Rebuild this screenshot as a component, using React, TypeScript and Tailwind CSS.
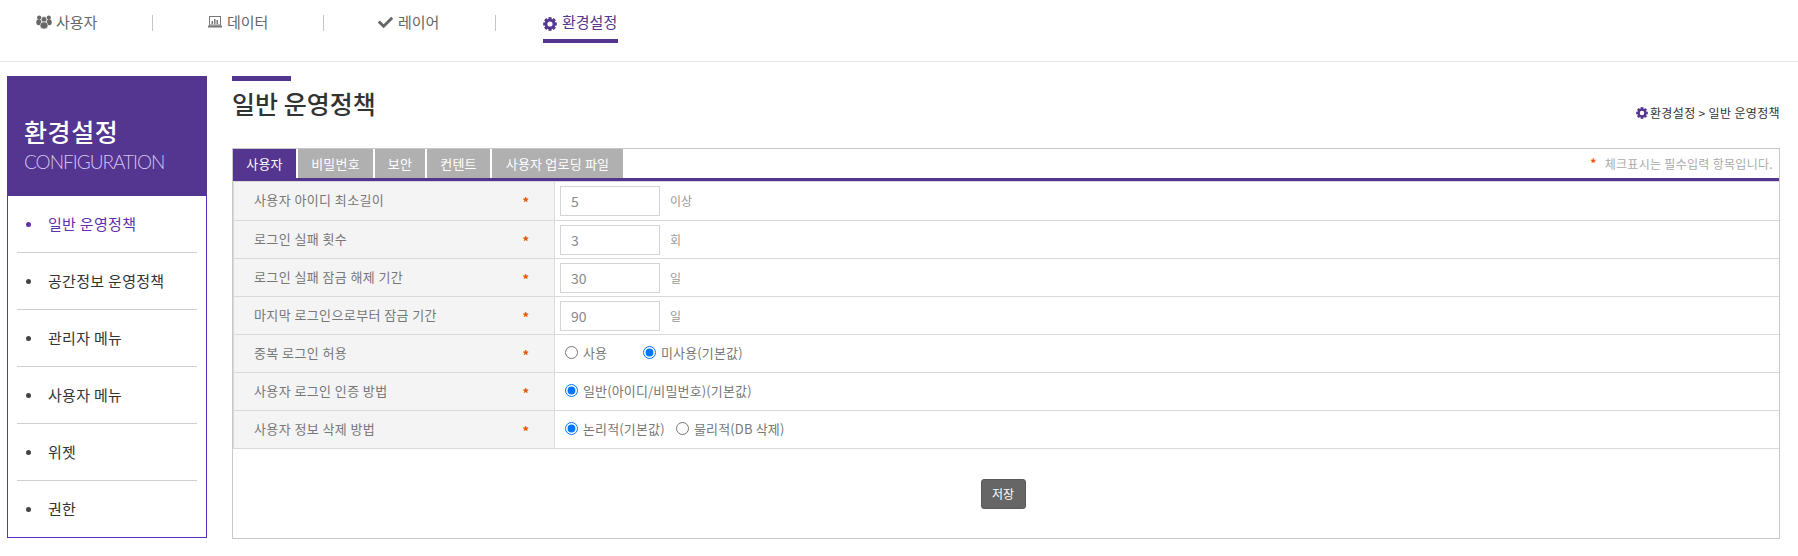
import React from "react";
import { FaCheck } from "react-icons/fa";

function Gear({ className }: { className: string }) {
  const teeth = [0, 45, 90, 135, 180, 225, 270, 315];
  return (
    <svg viewBox="0 0 14 14" className={className}>
      {teeth.map((a) => (
        <rect key={a} x="5.4" y="0.2" width="3.2" height="3" fill="currentColor" transform={`rotate(${a} 7 7)`} />
      ))}
      <circle cx="7" cy="7" r="3.9" fill="none" stroke="currentColor" strokeWidth="2.6" />
    </svg>
  );
}

function People() {
  return (
    <svg viewBox="0 0 16 14" className="w-[16px] h-[14px] text-[#666]">
      <circle cx="3.2" cy="2.6" r="2.1" fill="currentColor" />
      <circle cx="12.8" cy="2.6" r="2.1" fill="currentColor" />
      <ellipse cx="2.8" cy="7.2" rx="2.5" ry="3" fill="currentColor" />
      <ellipse cx="13.2" cy="7.2" rx="2.5" ry="3" fill="currentColor" />
      <circle cx="8" cy="4.4" r="2.8" fill="currentColor" stroke="#fff" strokeWidth="0.6" />
      <ellipse cx="8" cy="10.4" rx="4" ry="3.6" fill="currentColor" stroke="#fff" strokeWidth="0.6" />
    </svg>
  );
}

function LaptopChart() {
  return (
    <svg viewBox="0 0 14 12" className="w-[14px] h-[12px] text-[#777]">
      <rect x="1.5" y="0.5" width="11" height="8.5" fill="#fff" stroke="currentColor" strokeWidth="1" />
      <rect x="3.5" y="5" width="1.5" height="3" fill="currentColor" />
      <rect x="6" y="3" width="1.5" height="5" fill="currentColor" />
      <rect x="8.5" y="4" width="1.5" height="4" fill="currentColor" />
      <rect x="0" y="9.5" width="14" height="2" fill="currentColor" />
    </svg>
  );
}

const Sep = () => <div className="w-px h-[16px] mt-[15px] bg-[#c4c4c4]" />;

const rows: { label: string; value?: string; unit?: string; radios?: { text: string; checked: boolean; cls: string }[] }[] = [
  { label: "사용자 아이디 최소길이", value: "5", unit: "이상" },
  { label: "로그인 실패 횟수", value: "3", unit: "회" },
  { label: "로그인 실패 잠금 해제 기간", value: "30", unit: "일" },
  { label: "마지막 로그인으로부터 잠금 기간", value: "90", unit: "일" },
  {
    label: "중복 로그인 허용",
    radios: [
      { text: "사용", checked: false, cls: "w-[78px]" },
      { text: "미사용(기본값)", checked: true, cls: "" },
    ],
  },
  { label: "사용자 로그인 인증 방법", radios: [{ text: "일반(아이디/비밀번호)(기본값)", checked: true, cls: "" }] },
  {
    label: "사용자 정보 삭제 방법",
    radios: [
      { text: "논리적(기본값)", checked: true, cls: "w-[111px]" },
      { text: "물리적(DB 삭제)", checked: false, cls: "" },
    ],
  },
];

const tabs = [
  { t: "사용자", w: "w-[63px]", on: true },
  { t: "비밀번호", w: "w-[75px]", on: false },
  { t: "보안", w: "w-[50px]", on: false },
  { t: "컨텐트", w: "w-[63px]", on: false },
  { t: "사용자 업로딩 파일", w: "w-[131px]", on: false },
];

const side = ["일반 운영정책", "공간정보 운영정책", "관리자 메뉴", "사용자 메뉴", "위젯", "권한"];

export default function App() {
  return (
    <div className="w-[1798px] h-[556px] overflow-hidden bg-white font-['Noto_Sans_CJK_KR','Noto_Sans',sans-serif]">
      <header className="h-[62px] border-b border-[#e4e4ea] flex pl-[36px] text-[15px] text-[#666]">
        <div className="w-[116px] flex items-center gap-[4px] h-[30px] pt-[14px]">
          <People />
          <span>사용자</span>
        </div>
        <Sep />
        <div className="w-[170px] pl-[55px] flex items-center gap-[5px] h-[30px] pt-[14px]">
          <LaptopChart />
          <span>데이터</span>
        </div>
        <Sep />
        <div className="w-[171px] pl-[54px] flex items-center gap-[5px] h-[30px] pt-[14px]">
          <FaCheck className="w-[15px] h-[15px] text-[#666]" />
          <span>레이어</span>
        </div>
        <Sep />
        <div className="ml-[47px] h-[43px] w-[75px] border-b-4 border-[#54358f] text-[#54358f] flex items-start gap-[5px] pt-[12px] leading-[20px]">
          <Gear className="w-[14px] h-[14px] mt-[5px] shrink-0" />
          <span className="whitespace-nowrap">환경설정</span>
        </div>
      </header>

      <div className="flex pl-[7px] pt-[14px]">
        <aside className="w-[200px]">
          <div className="h-[120px] bg-[#54358f] pl-[17px] pt-[37px]">
            <div className="text-[25px] leading-[36px] font-medium text-white tracking-[0.6px]">환경설정</div>
            <div className="text-[19px] leading-[26px] font-['Lato',sans-serif] font-light text-[#d3c3f2] tracking-[-1px]">CONFIGURATION</div>
          </div>
          <ul className="h-[342px] border border-t-0 border-[#5f2fc0] px-[9px]">
            {side.map((s, i) => (
              <li
                key={s}
                className={`h-[57px] flex items-center text-[15px] tracking-[0.3px] pl-[9px] ${i < 5 ? "border-b border-[#cfcfcf]" : ""} ${i === 0 ? "text-[#5f2fb0]" : "text-[#333]"}`}
              >
                <span className={`w-[5px] h-[5px] rounded-full mr-[17px] ${i === 0 ? "bg-[#5f2fb0]" : "bg-[#444]"}`} />
                {s}
              </li>
            ))}
          </ul>
        </aside>

        <main className="ml-[25px] w-[1548px]">
          <div className="w-[59px] h-[5px] bg-[#54358f]" />
          <div className="flex justify-between h-[67px]">
            <h1 className="text-[25px] leading-[36px] mt-[4px] font-medium text-[#333]">일반 운영정책</h1>
            <div className="flex items-center gap-[2px] text-[12px] tracking-[0.35px] h-[20px] mt-[22px] text-[#333]">
              <Gear className="w-[12px] h-[12px] text-[#54358f]" />
              <span>환경설정 &gt; 일반 운영정책</span>
            </div>
          </div>

          <section className="h-[391px] border border-[#c8c8c8]">
            <div className="flex justify-between h-[32px] border-b-[3px] border-[#54358f]">
              <div className="flex gap-[2px]">
                {tabs.map((t) => (
                  <div
                    key={t.t}
                    className={`${t.w} h-[29px] flex items-center justify-center text-[13px] tracking-[0.2px] text-white ${t.on ? "bg-[#54358f]" : "bg-[#b0b0b0]"}`}
                  >
                    {t.t}
                  </div>
                ))}
              </div>
              <div className="flex items-center h-[29px] pr-[6px] text-[12px] tracking-[0.3px] text-[#aaa]">
                <span className="text-[#e85500] mr-[8px] font-bold mb-[2px]">*</span>
                체크표시는 필수입력 항목입니다.
              </div>
            </div>

            <div className="border-t border-[#d6d6d6]">
              {rows.map((r, i) => (
                <div key={r.label} className={`flex border-b border-[#d9d9d9] ${i === 0 ? "h-[39px]" : "h-[38px]"}`}>
                  <div className="w-[322px] shrink-0 bg-[#f4f4f4] border-l border-r border-[#d9d9d9] flex items-center justify-between pl-[20px] pr-[25px] text-[13px] text-[#777]">
                    <span className="tracking-[0.4px] mb-[2px]">{r.label}</span>
                    <span className="text-[#e85500] font-bold mt-[2px]">*</span>
                  </div>
                  {r.radios ? (
                    <div className="flex items-center pl-[10px] pb-[2px] text-[13px] tracking-[0.15px] text-[#777]">
                      {r.radios.map((x) => (
                        <label key={x.text} className={`flex items-center gap-[5px] ${x.cls}`}>
                          <input type="radio" readOnly checked={x.checked} className="w-[13px] h-[13px] m-0" />
                          {x.text}
                        </label>
                      ))}
                    </div>
                  ) : (
                    <div className="flex items-center pl-[5px] text-[12px] text-[#999]">
                      <input
                        readOnly
                        value={r.value}
                        className="w-[100px] h-[30px] border border-[#d4d4d4] pl-[10px] text-[14px] text-[#888] bg-white"
                      />
                      <span className="ml-[10px]">{r.unit}</span>
                    </div>
                  )}
                </div>
              ))}
            </div>

            <div className="flex justify-center pt-[30px] pr-[6px]">
              <button className="w-[45px] h-[30px] rounded-[3px] bg-[#666] border border-[#5a5a5a] text-white text-[12px]">저장</button>
            </div>
          </section>
        </main>
      </div>
    </div>
  );
}
